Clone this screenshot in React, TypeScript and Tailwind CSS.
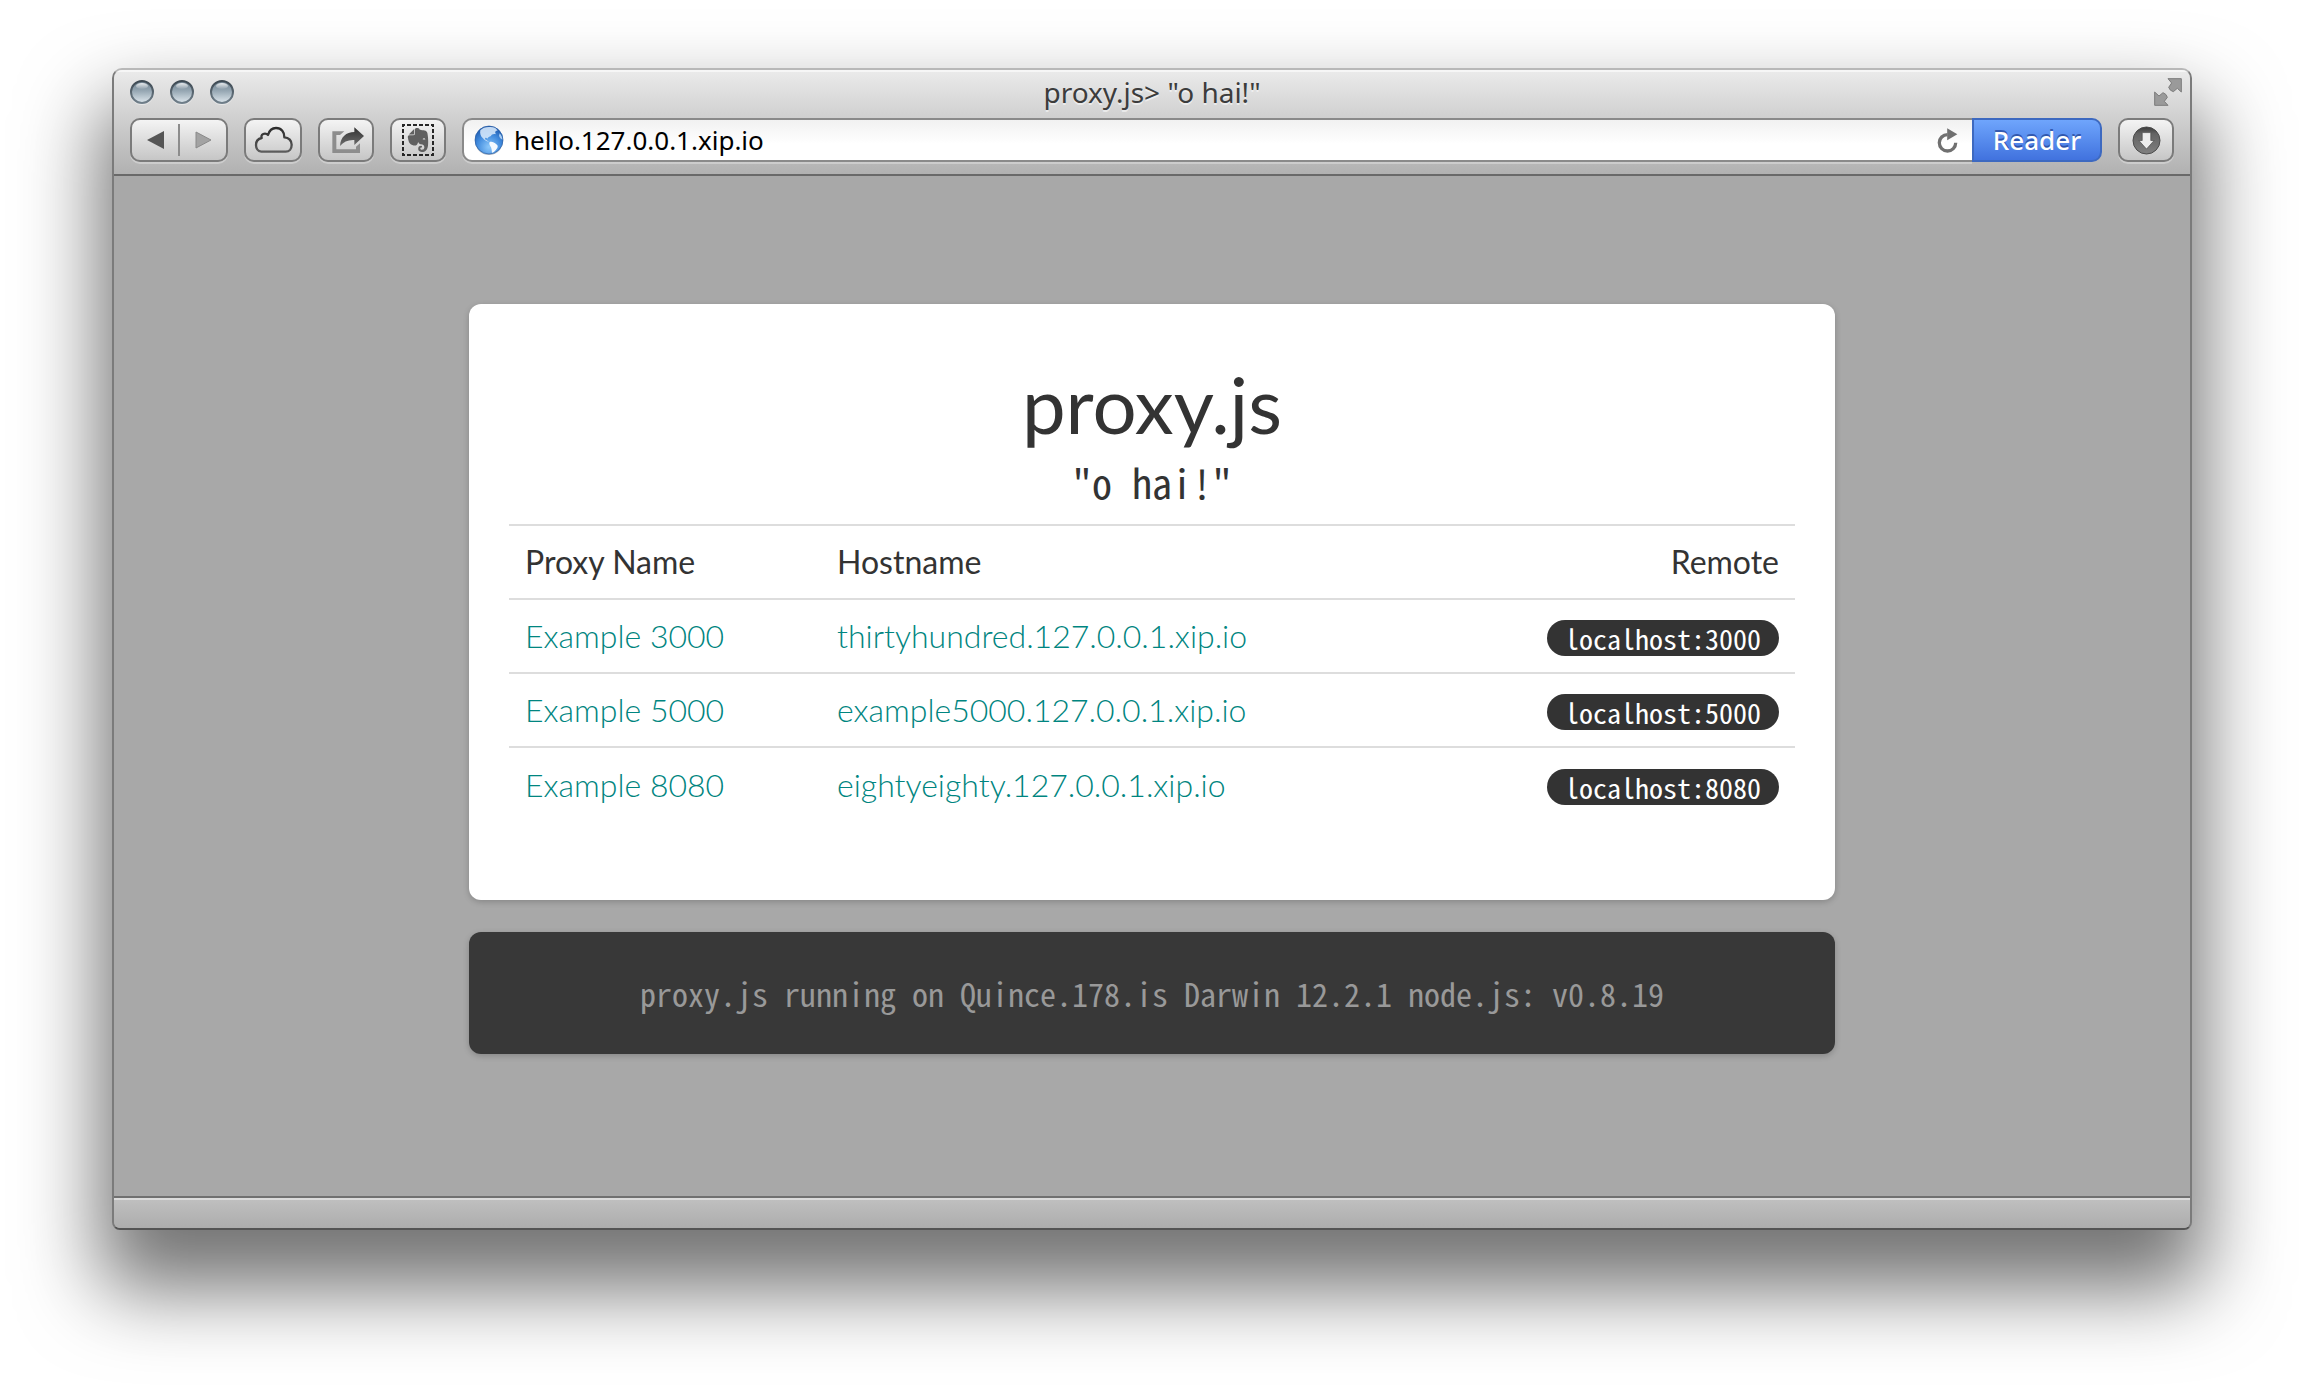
import type { ReactNode } from "react";
import { SiEvernote } from "react-icons/si";

const proxies = [
  { name: "Example 3000", host: "thirtyhundred.127.0.0.1.xip.io", remote: "localhost:3000" },
  { name: "Example 5000", host: "example5000.127.0.0.1.xip.io", remote: "localhost:5000" },
  { name: "Example 8080", host: "eightyeighty.127.0.0.1.xip.io", remote: "localhost:8080" },
];

const buttonFace =
  "h-11 rounded-[10px] border-2 border-[#7b7b7b] bg-linear-to-b from-[#f4f4f4] to-[#c6c6c6] shadow-[0_2px_0_rgba(255,255,255,0.3)]";

function ToolButton({ label, width, children }: { label: string; width: string; children: ReactNode }) {
  return (
    <button type="button" aria-label={label} className={`${buttonFace} ${width} flex shrink-0 items-center justify-center`}>
      {children}
    </button>
  );
}

function TrafficLight({ label }: { label: string }) {
  return (
    <button type="button" aria-label={label} className="size-6">
      <svg viewBox="0 0 24 24" className="size-6 overflow-visible">
        <defs>
          <linearGradient id="lightFill" x1="0" y1="0" x2="0" y2="1">
            <stop offset="0" stopColor="#6f8290" />
            <stop offset="0.45" stopColor="#96a7b3" />
            <stop offset="1" stopColor="#dfe8ee" />
          </linearGradient>
          <linearGradient id="lightEdge" x1="0" y1="0" x2="0" y2="1">
            <stop offset="0" stopColor="#3d4952" />
            <stop offset="1" stopColor="#71808b" />
          </linearGradient>
          <linearGradient id="lightGloss" x1="0" y1="0" x2="0" y2="1">
            <stop offset="0" stopColor="#ffffff" stopOpacity="0.85" />
            <stop offset="1" stopColor="#ffffff" stopOpacity="0.05" />
          </linearGradient>
        </defs>
        <circle cx="12" cy="13" r="12" fill="#ffffff" opacity="0.45" />
        <circle cx="12" cy="12" r="11" fill="url(#lightFill)" stroke="url(#lightEdge)" strokeWidth="2" />
        <ellipse cx="12" cy="6" rx="6" ry="3" fill="url(#lightGloss)" />
      </svg>
    </button>
  );
}

function FullscreenIcon() {
  return (
    <svg viewBox="762 69 84 84" className="size-7">
      <g fill="#9a9a9a" stroke="#7c7c7c" strokeWidth="3" strokeLinejoin="miter">
        <path d="M804 71H844V111L832 100L820 110Q810 108 806 97L815 84Z" />
        <path d="M764 111V151H804L793 139L802 127Q800 117 789 113L777 123Z" />
      </g>
    </svg>
  );
}

function CloudIcon() {
  return (
    <svg viewBox="460 213 117 84" className="h-7 w-[39px]">
      <defs>
        <linearGradient id="cloudInk" x1="0" y1="0" x2="0" y2="1">
          <stop offset="0" stopColor="#2c2c2c" />
          <stop offset="1" stopColor="#5c5c5c" />
        </linearGradient>
      </defs>
      <path
        d="M482 290C471 289 466 279 466 270C466 259 473 251 483 249C480 241 486 236 493 236C496 236 499 237 502 240C506 226 514 219 526 219C542 219 552 231 551 247C565 247 573 258 573 269C573 281 566 290 555 290Z"
        fill="none"
        stroke="url(#cloudInk)"
        strokeWidth="7"
        strokeLinejoin="round"
      />
    </svg>
  );
}

function ShareIcon() {
  return (
    <svg viewBox="696 213 99 81" className="ml-1 h-[27px] w-[33px]">
      <defs>
        <linearGradient id="shareInk" x1="0" y1="0" x2="0" y2="1">
          <stop offset="0" stopColor="#303030" />
          <stop offset="1" stopColor="#6e6e6e" />
        </linearGradient>
      </defs>
      <path d="M733 226H697V291H780V262L768 272V280H709V237H720Z" fill="#8d8d8d" />
      <path d="M792 240L763 214V228C738 228 722 243 720 270C731 257 744 251 763 252V267Z" fill="url(#shareInk)" />
    </svg>
  );
}

function ClipperIcon() {
  return (
    <span className="grid size-8 place-items-center">
      <svg viewBox="0 0 32 32" className="col-start-1 row-start-1 size-8">
        <rect x="1" y="1" width="30" height="30" fill="none" stroke="#262626" strokeWidth="2" strokeDasharray="4 2" strokeDashoffset="2" />
      </svg>
      <SiEvernote className="col-start-1 row-start-1 size-6 text-[#606060]" />
    </span>
  );
}

function GlobeIcon() {
  return (
    <svg viewBox="100 208 88 90" className="size-[30px] shrink-0">
      <defs>
        <radialGradient id="sea" cx="0.5" cy="0.75" r="0.8">
          <stop offset="0" stopColor="#8cc8fb" />
          <stop offset="0.55" stopColor="#3f89dc" />
          <stop offset="1" stopColor="#164c9f" />
        </radialGradient>
      </defs>
      <circle cx="144" cy="256" r="42" fill="#5a6d86" opacity="0.5" />
      <circle cx="144" cy="253" r="42" fill="url(#sea)" stroke="#2b5fa6" strokeWidth="2" />
      <path
        d="M118 224C124 216 136 213 148 214C160 214 168 219 170 226C164 224 160 230 165 236C158 234 152 236 150 241C145 243 141 244 139 249C136 245 131 246 132 251C136 252 138 256 144 258C138 259 130 254 126 248C119 243 116 232 118 224Z"
        fill="#d3e6fa"
        opacity="0.9"
      />
      <path d="M146 259C152 256 160 260 166 266C172 269 171 276 166 281C162 287 157 292 153 291C152 284 152 277 148 272C145 267 144 262 146 259Z" fill="#f4f9ff" />
      <path d="M176 233C181 238 184 246 184 252C180 250 175 245 174 240Z" fill="#a9cdf2" />
    </svg>
  );
}

function ReloadIcon() {
  return (
    <svg viewBox="112 217 64 76" className="h-[25px] w-[21px]">
      <path d="M144 237A25 25 0 1 0 169 262" fill="none" stroke="#707070" strokeWidth="10" />
      <path d="M143 218L174 236L143 254Z" fill="#707070" />
    </svg>
  );
}

function DownloadIcon() {
  return (
    <svg viewBox="694 211 88 88" className="size-[29px]">
      <defs>
        <linearGradient id="discInk" x1="0" y1="0" x2="0" y2="1">
          <stop offset="0" stopColor="#3c3c3c" />
          <stop offset="0.25" stopColor="#646464" />
          <stop offset="1" stopColor="#808080" />
        </linearGradient>
      </defs>
      <circle cx="738" cy="255" r="41" fill="url(#discInk)" stroke="#4b4b4b" strokeWidth="3" />
      <path d="M725 231H751V255H761L738 281L715 255H725Z" fill="#ececec" stroke="#484848" strokeWidth="2" />
    </svg>
  );
}

function BrowserHeader() {
  return (
    <header className="border-b-2 border-[#696969] bg-linear-to-b from-[#ebebeb] to-[#b1b1b1] pt-2 pb-3 shadow-[inset_0_2px_0_#f6f6f6]">
      <div className="grid h-7 grid-cols-[1fr_auto_1fr] items-center px-2">
        <div className="ml-2 flex gap-4">
          <TrafficLight label="Close" />
          <TrafficLight label="Minimize" />
          <TrafficLight label="Zoom" />
        </div>
        <p className="text-[28px] leading-7 text-[#3c3c3c] [text-shadow:0_2px_0_rgba(255,255,255,0.5)]">proxy.js&gt; "o hai!"</p>
        <button type="button" aria-label="Enter full screen" className="justify-self-end">
          <FullscreenIcon />
        </button>
      </div>

      <div className="mt-3 flex items-center gap-4 px-4">
        <div className={`${buttonFace} flex w-[98px] shrink-0 items-center`}>
          <button type="button" aria-label="Back" className="flex h-8 flex-1 items-center justify-center border-r-2 border-[#8c8c8c]">
            <svg viewBox="0 0 17 18" className="h-[18px] w-[17px]">
              <path d="M0 9L17 0V18Z" fill="#555555" />
            </svg>
          </button>
          <button type="button" aria-label="Forward" className="flex h-8 flex-1 items-center justify-center">
            <svg viewBox="0 0 17 18" className="h-[18px] w-[17px]">
              <path d="M1 1L16 9L1 17Z" fill="#a3a3a3" stroke="#8a8a8a" strokeWidth="1" />
            </svg>
          </button>
        </div>
        <ToolButton label="iCloud tabs" width="w-[58px]">
          <CloudIcon />
        </ToolButton>
        <ToolButton label="Share" width="w-14">
          <ShareIcon />
        </ToolButton>
        <ToolButton label="Web clipper" width="w-14">
          <ClipperIcon />
        </ToolButton>

        <div className="flex h-11 min-w-0 flex-1 items-stretch">
          <div className="flex min-w-0 flex-1 items-center rounded-l-[10px] border-2 border-r-0 border-[#8a8a8a] bg-linear-to-b from-[#f1f1f1] to-white to-60% pr-3.5 pl-[10px] shadow-[0_2px_0_rgba(255,255,255,0.3)]">
            <GlobeIcon />
            <input
              type="text"
              aria-label="Address"
              defaultValue="hello.127.0.0.1.xip.io"
              className="ml-2.5 min-w-0 flex-1 bg-transparent text-[26px] leading-8 text-black outline-none"
            />
            <button type="button" aria-label="Reload">
              <ReloadIcon />
            </button>
          </div>
          <button
            type="button"
            className="w-[130px] rounded-r-[10px] border-2 border-[#3d69c0] bg-linear-to-b from-[#6fa5fc] to-[#4172de] text-[26px] leading-8 font-medium text-white [text-shadow:0_-2px_0_rgba(20,50,130,0.6)]"
          >
            Reader
          </button>
        </div>

        <ToolButton label="Downloads" width="w-14">
          <DownloadIcon />
        </ToolButton>
      </div>
    </header>
  );
}

function ProxyTable() {
  return (
    <table className="w-full table-fixed border-collapse text-left text-[32px] leading-10">
      <colgroup>
        <col className="w-[312px]" />
        <col />
        <col className="w-[300px]" />
      </colgroup>
      <thead>
        <tr className="h-[74px] border-t-2 border-[#dddddd]">
          <th className="px-4 font-normal">Proxy Name</th>
          <th className="px-4 font-normal">Hostname</th>
          <th className="px-4 text-right font-normal">Remote</th>
        </tr>
      </thead>
      <tbody>
        {proxies.map((proxy) => (
          <tr key={proxy.name} className="h-[74px] border-t-2 border-[#dddddd]">
            <td className="px-4 font-light">
              <a href="#" className="text-[#008580]">{proxy.name}</a>
            </td>
            <td className="px-4 font-light">
              <a href="#" className="text-[#008580]">{proxy.host}</a>
            </td>
            <td className="px-4 pt-1">
              <span className="ml-auto block h-9 w-fit rounded-full bg-[#333333] px-[18px] font-['Noto_Sans_Mono_CJK_SC','Liberation_Mono',monospace] text-[28px] leading-9 text-white">
                {proxy.remote}
              </span>
            </td>
          </tr>
        ))}
      </tbody>
    </table>
  );
}

export default function App() {
  return (
    <div className="flex min-h-screen flex-col bg-white px-28 pt-17 pb-39">
      <div className="flex flex-1 flex-col overflow-hidden rounded-t-[10px] rounded-b-lg border-2 border-[#7b7b7b] border-t-[#b8b8b8] border-b-[#545454] bg-[#a8a8a8] font-['Noto_Sans',sans-serif] shadow-[0_48px_80px_12px_rgba(0,0,0,0.55)]">
        <BrowserHeader />

        <main className="flex flex-1 flex-col px-8 pt-32 pb-32 font-['Lato',sans-serif] text-[#333333]">
          <section className="mx-auto w-full max-w-[1366px] rounded-xl bg-white px-10 pt-15 pb-[79px] shadow-[0_2px_6px_rgba(0,0,0,0.2)]">
            <h1 className="text-center text-[78px] leading-20">proxy.js</h1>
            <p className="mt-1 mb-2 text-center font-['Noto_Sans_Mono_CJK_SC','Liberation_Mono',monospace] text-[40px] leading-[68px]">"o hai!"</p>
            <ProxyTable />
          </section>

          <footer className="mx-auto mt-8 w-full max-w-[1366px] rounded-xl bg-[#383838] px-10 py-10 text-center font-['Noto_Sans_Mono_CJK_SC','Liberation_Mono',monospace] text-[32px] leading-[42px] text-[#999999] shadow-[0_2px_6px_rgba(0,0,0,0.2)]">
            proxy.js running on Quince.178.is Darwin 12.2.1 node.js: v0.8.19
          </footer>
        </main>

        <div className="h-8 border-t-2 border-[#707070] bg-linear-to-b from-[#c0c0c0] to-[#adadad] shadow-[inset_0_2px_0_#dcdcdc]" />
      </div>
    </div>
  );
}
